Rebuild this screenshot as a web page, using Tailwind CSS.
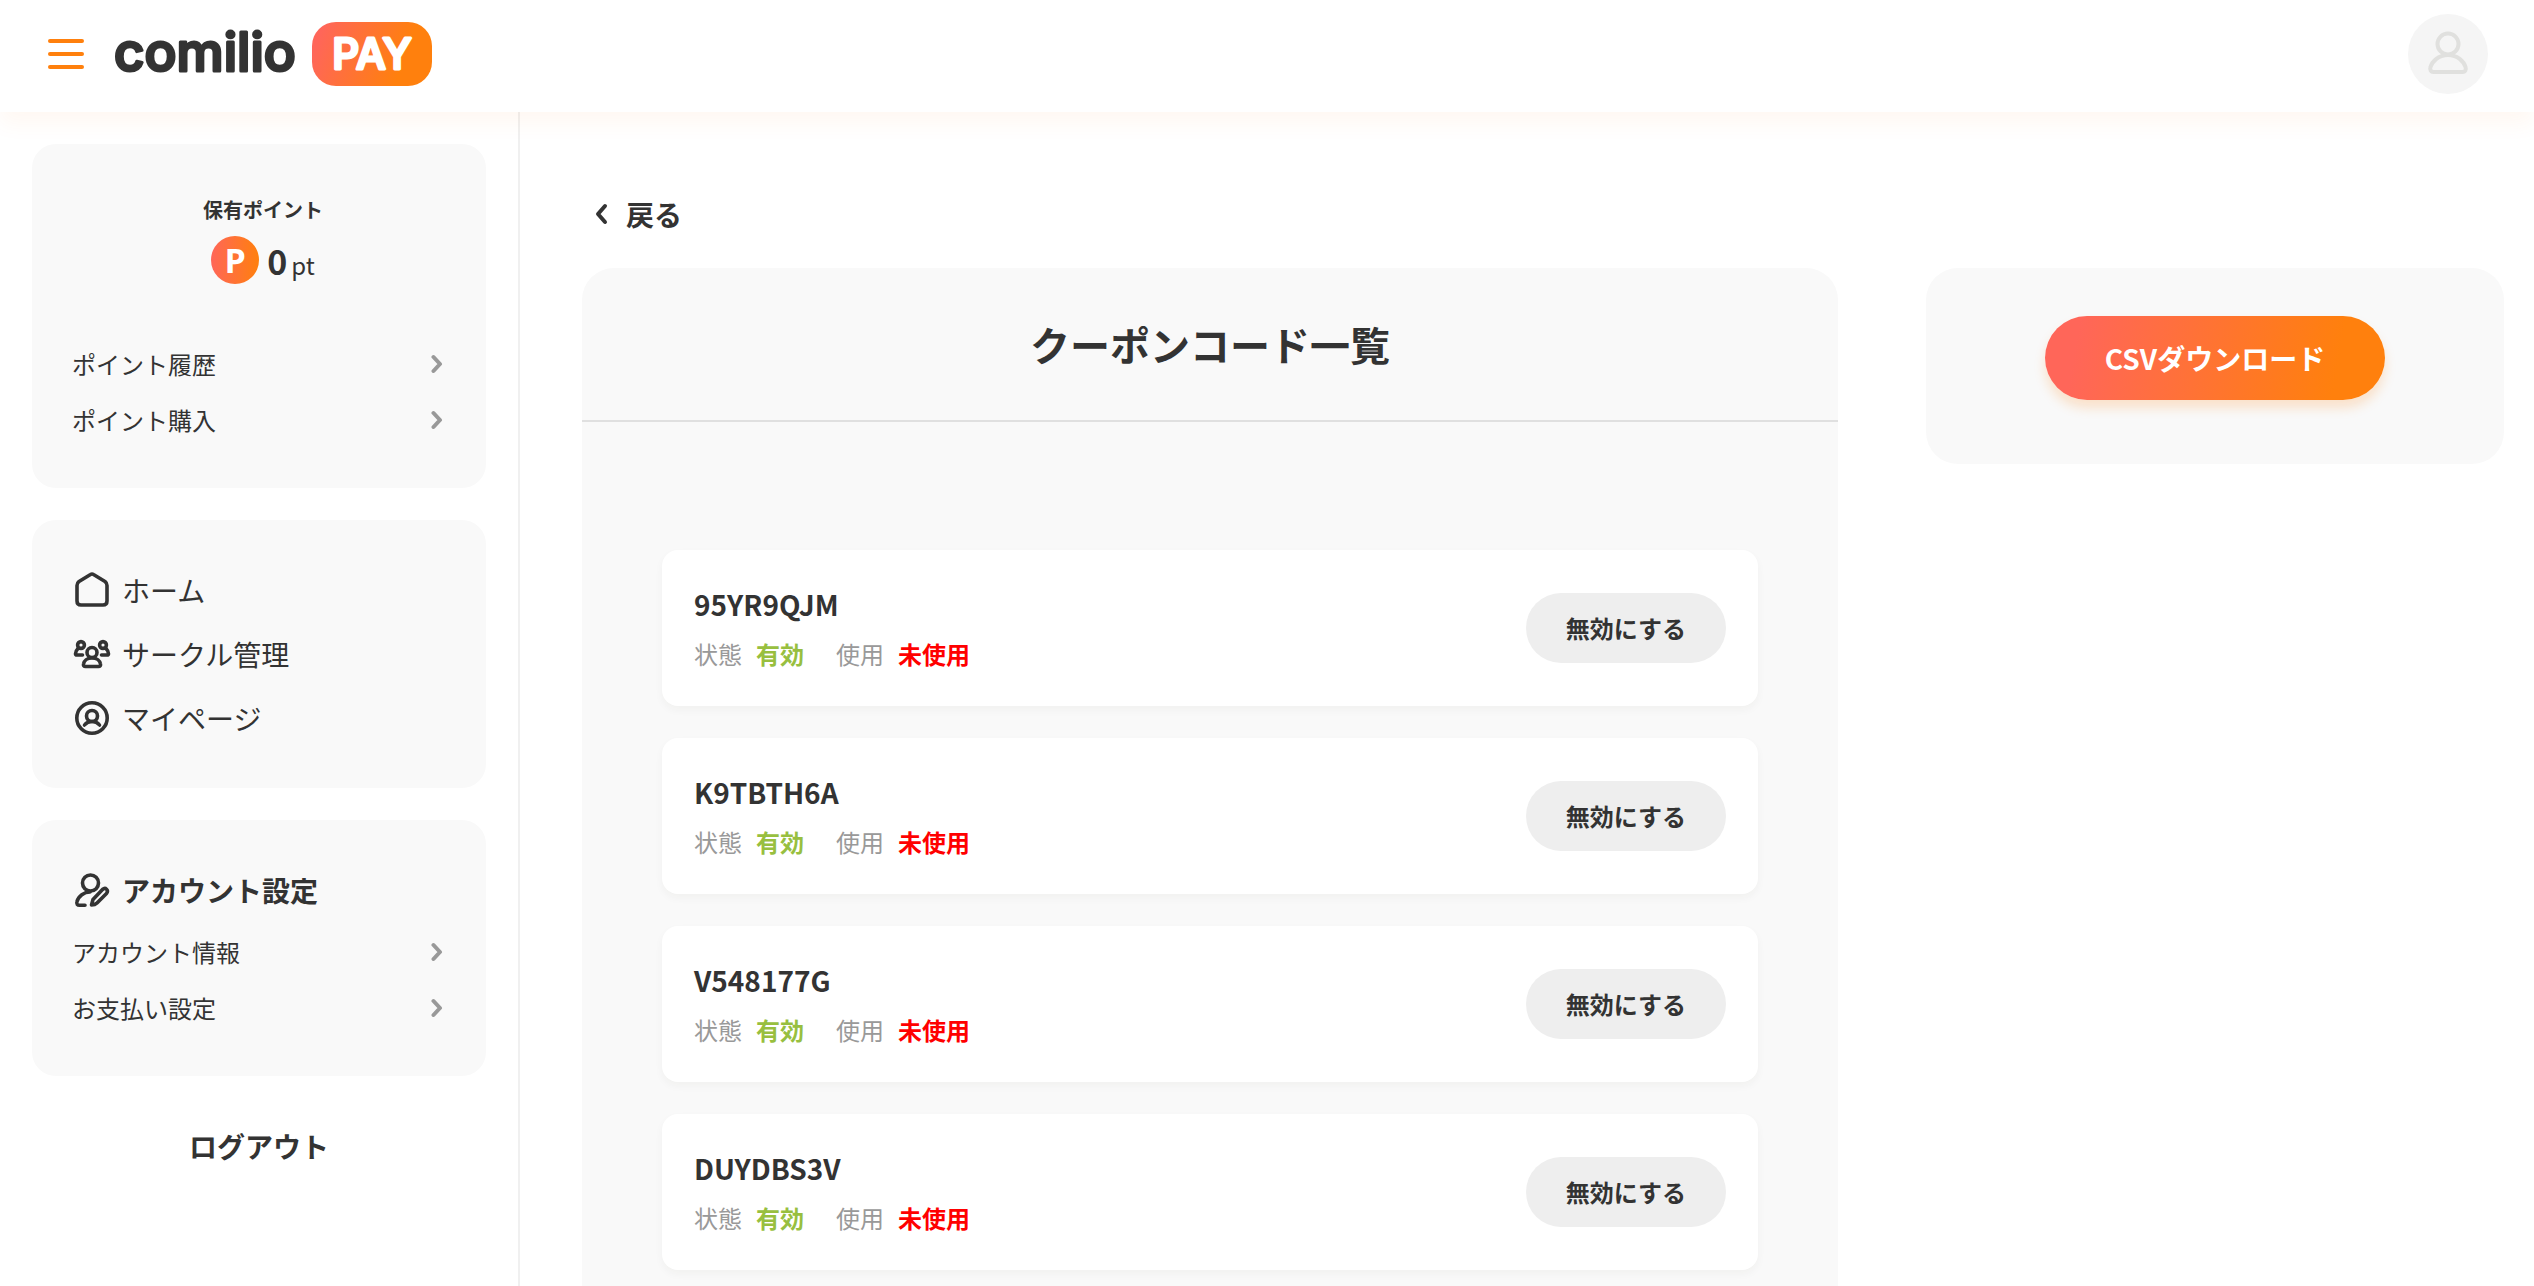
<!doctype html>
<html lang="ja">

<head>
    <meta charset="UTF-8">
    <meta name="viewport" content="width=device-width, initial-scale=1.0">
    <title>クーポンコード一覧 | comilio PAY</title>
    <script src="https://cdn.jsdelivr.net/npm/@tailwindcss/browser@4"></script>
</head>

<body class="flex flex-col min-h-screen bg-white text-[#333] font-['Noto_Sans_CJK_JP',sans-serif]">
    <!-- header -->
    <header class="relative z-10 flex items-center justify-between bg-white h-28 pl-12 pr-[46px] pb-1 shadow-[0_12px_20px_rgba(255,115,20,0.05)]">
        <div class="flex items-center gap-7">
            <button class="flex flex-col gap-[9px] w-9" aria-label="メニュー">
                <span class="h-1 w-full rounded-full bg-[#ff800d]"></span>
                <span class="h-1 w-full rounded-full bg-[#ff800d]"></span>
                <span class="h-1 w-full rounded-full bg-[#ff800d]"></span>
            </button>
            <a href="#" aria-label="comilio PAY">
                <svg class="overflow-visible" width="322" height="80" viewBox="0 -8 322 80">
                    <defs>
                        <linearGradient id="brand" x1="0" y1="0" x2="1" y2="0.2">
                            <stop offset="0.1" stop-color="#ff6659" />
                            <stop offset="0.85" stop-color="#ff800d" />
                        </linearGradient>
                    </defs>
                    <rect x="200" width="120" height="64" rx="24" fill="url(#brand)" />
                    <g font-family="Inter, sans-serif" stroke-linejoin="round">
                        <text x="2" y="49" font-size="53" font-weight="500" fill="#333" stroke="#333" stroke-width="3">comilio</text>
                        <text x="260" y="47" font-size="42" font-weight="500" text-anchor="middle" fill="#fff" stroke="#fff" stroke-width="3">PAY</text>
                    </g>
                </svg>
            </a>
        </div>
        <button class="flex items-center justify-center size-20 rounded-full bg-[#f5f5f5]" aria-label="アカウント">
            <svg width="44" height="48" viewBox="0 0 44 48" fill="none" stroke="#e0e0de" stroke-width="4">
                <circle cx="22" cy="14" r="10.5" />
                <path d="M22 25C12 25 6 32 4.500 37c-1 3 .5 5 3 5h29c2.500 0 4-2 3-5C38 32 32 25 22 25z" />
            </svg>
        </button>
    </header>

    <div class="flex flex-1">
        <!-- sidebar -->
        <aside class="shrink-0 w-[520px] border-r-2 border-[#f0f0f0] p-8 flex flex-col gap-8">
            <section class="bg-[#f9f9f9] rounded-3xl px-10 pt-[50px] pb-10">
                <div class="flex flex-col items-center gap-1.5 pl-2">
                    <p class="text-xl leading-8 font-bold">保有ポイント</p>
                    <div class="flex items-center gap-2 h-14">
                        <span class="flex items-center justify-center size-12 rounded-full bg-linear-to-r/srgb from-[#ff6659] to-[#ff800d] text-white text-[34px] leading-none font-bold font-['Open_Sans']">P</span>
                        <p class="flex items-baseline gap-1"><b class="text-[34px]">0</b><span class="text-2xl">pt</span></p>
                    </div>
                </div>
                <ul class="mt-12">
                    <li><a href="#" class="flex items-center justify-between h-14 text-2xl">ポイント履歴
                        <svg class="mr-[3px]" width="12" height="20" viewBox="0 0 12 20" fill="none" stroke="#999" stroke-width="4" stroke-linecap="round" stroke-linejoin="round"><path d="M2.500 3L9 10l-6.500 7" /></svg></a></li>
                    <li><a href="#" class="flex items-center justify-between h-14 text-2xl">ポイント購入
                        <svg class="mr-[3px]" width="12" height="20" viewBox="0 0 12 20" fill="none" stroke="#999" stroke-width="4" stroke-linecap="round" stroke-linejoin="round"><path d="M2.500 3L9 10l-6.500 7" /></svg></a></li>
                </ul>
            </section>

            <nav class="bg-[#f9f9f9] rounded-3xl px-10 py-[38px]">
                <a href="#" class="flex items-center gap-2.5 h-16 text-[28px]">
                    <svg width="40" height="40" viewBox="0 0 40 40" fill="none" stroke="#333" stroke-width="3.600" stroke-linejoin="round">
                        <path d="M18.500 4.500 7 11.500q-2 1.500-2 4v15.500q0 4 4 4h22q4 0 4-4V15.500q0-2.500-2-4L21.500 4.500q-1.500-1-3 0z" />
                    </svg>ホーム</a>
                <a href="#" class="flex items-center gap-2.5 h-16 text-[28px]">
                    <svg width="40" height="40" viewBox="0 0 40 40" fill="none" stroke="#333" stroke-width="3.600" stroke-linecap="round" stroke-linejoin="round">
                        <circle cx="20" cy="18.500" r="5" />
                        <path d="M20 24c-5 0-8 3-8.500 6-.3 1.500.5 2.500 2 2.500h13c1.500 0 2.300-1 2-2.500-.5-3-3.500-6-8.500-6z" />
                        <circle cx="9" cy="11" r="3.400" />
                        <circle cx="31" cy="11" r="3.400" />
                        <path d="M6 14.500c-2 2-2.500 4-2.500 5.200 0 .8.500 1.300 1.500 1.300h5.500M34 14.500c2 2 2.500 4 2.500 5.200 0 .8-.5 1.300-1.500 1.300h-5.500" />
                    </svg>サークル管理</a>
                <a href="#" class="flex items-center gap-2.5 h-16 text-[28px]">
                    <svg width="40" height="40" viewBox="0 0 40 40" fill="none" stroke="#333" stroke-width="3.600" stroke-linecap="round">
                        <circle cx="20" cy="20" r="15.200" />
                        <circle cx="20" cy="18" r="5.500" />
                        <path d="M12.500 27c2-2.500 4.500-3.500 7.500-3.500s5.500 1 7.500 3.500" />
                    </svg>マイページ</a>
            </nav>

            <section class="bg-[#f9f9f9] rounded-3xl px-10 pt-[38px] pb-10">
                <h2 class="flex items-center gap-2.5 h-16 text-[28px] font-bold">
                    <svg width="40" height="40" viewBox="0 0 40 40" fill="none" stroke="#333" stroke-width="3.600" stroke-linecap="round" stroke-linejoin="round">
                        <circle cx="18.500" cy="13" r="8" />
                        <path d="M18 22c-6 0-11.500 4-13 9.500C4.200 34 5.500 35.200 7.500 35.200h5.500" />
                        <path d="M19.500 35l1.500-5.500 9.500-10c3-2.500 6.500.5 4 4L25 33c-1.500 1.500-3.500 2-5.500 2z" />
                    </svg>アカウント設定</h2>
                <ul class="mt-0.5">
                    <li><a href="#" class="flex items-center justify-between h-14 text-2xl">アカウント情報
                        <svg class="mr-[3px]" width="12" height="20" viewBox="0 0 12 20" fill="none" stroke="#999" stroke-width="4" stroke-linecap="round" stroke-linejoin="round"><path d="M2.500 3L9 10l-6.500 7" /></svg></a></li>
                    <li><a href="#" class="flex items-center justify-between h-14 text-2xl">お支払い設定
                        <svg class="mr-[3px]" width="12" height="20" viewBox="0 0 12 20" fill="none" stroke="#999" stroke-width="4" stroke-linecap="round" stroke-linejoin="round"><path d="M2.500 3L9 10l-6.500 7" /></svg></a></li>
                </ul>
            </section>

            <button class="mt-3.5 h-12 text-[28px] font-bold">ログアウト</button>
        </aside>

        <!-- main -->
        <main class="flex flex-col flex-1 pt-[78px] pl-[62px] pr-[30px]">
            <a href="#" class="flex items-center gap-4 self-start h-12 mb-[30px] pl-3 text-[28px] font-bold">
                <svg width="16" height="24" viewBox="0 0 16 24" fill="none" stroke="#333" stroke-width="4" stroke-linecap="round" stroke-linejoin="round"><path d="M11 4L4 12l7 8" /></svg>戻る</a>

            <div class="flex flex-1 gap-[88px]">
                <section class="flex-1 bg-[#f9f9f9] rounded-t-[32px]">
                    <h1 class="h-[154px] flex items-center justify-center border-b-2 border-[#e0e0e0] text-[40px] font-bold">クーポンコード一覧</h1>
                    <ul class="flex flex-col gap-8 px-20 pt-32">
                        <li class="flex items-center justify-between h-[156px] px-8 bg-white rounded-2xl shadow-[0_4px_8px_rgba(51,51,0,0.04)]">
                            <div class="pt-0.5">
                                <p class="text-[28px] leading-[50px] font-bold">95YR9QJM</p>
                                <p class="flex gap-8 text-2xl leading-[50px] text-[#999]">
                                    <span>状態<b class="ml-3.5 text-[#98bf3f]">有効</b></span>
                                    <span>使用<b class="ml-3.5 text-[#f00]">未使用</b></span>
                                </p>
                            </div>
                            <button class="h-[70px] px-10 rounded-full bg-[#eee] text-2xl font-bold">無効にする</button>
                        </li>
                        <li class="flex items-center justify-between h-[156px] px-8 bg-white rounded-2xl shadow-[0_4px_8px_rgba(51,51,0,0.04)]">
                            <div class="pt-0.5">
                                <p class="text-[28px] leading-[50px] font-bold">K9TBTH6A</p>
                                <p class="flex gap-8 text-2xl leading-[50px] text-[#999]">
                                    <span>状態<b class="ml-3.5 text-[#98bf3f]">有効</b></span>
                                    <span>使用<b class="ml-3.5 text-[#f00]">未使用</b></span>
                                </p>
                            </div>
                            <button class="h-[70px] px-10 rounded-full bg-[#eee] text-2xl font-bold">無効にする</button>
                        </li>
                        <li class="flex items-center justify-between h-[156px] px-8 bg-white rounded-2xl shadow-[0_4px_8px_rgba(51,51,0,0.04)]">
                            <div class="pt-0.5">
                                <p class="text-[28px] leading-[50px] font-bold">V548177G</p>
                                <p class="flex gap-8 text-2xl leading-[50px] text-[#999]">
                                    <span>状態<b class="ml-3.5 text-[#98bf3f]">有効</b></span>
                                    <span>使用<b class="ml-3.5 text-[#f00]">未使用</b></span>
                                </p>
                            </div>
                            <button class="h-[70px] px-10 rounded-full bg-[#eee] text-2xl font-bold">無効にする</button>
                        </li>
                        <li class="flex items-center justify-between h-[156px] px-8 bg-white rounded-2xl shadow-[0_4px_8px_rgba(51,51,0,0.04)]">
                            <div class="pt-0.5">
                                <p class="text-[28px] leading-[50px] font-bold">DUYDBS3V</p>
                                <p class="flex gap-8 text-2xl leading-[50px] text-[#999]">
                                    <span>状態<b class="ml-3.5 text-[#98bf3f]">有効</b></span>
                                    <span>使用<b class="ml-3.5 text-[#f00]">未使用</b></span>
                                </p>
                            </div>
                            <button class="h-[70px] px-10 rounded-full bg-[#eee] text-2xl font-bold">無効にする</button>
                        </li>
                    </ul>
                </section>

                <section class="shrink-0 w-[578px] self-start flex justify-center bg-[#f9f9f9] rounded-[32px] pt-12 pb-16">
                    <button class="h-[84px] px-[60px] rounded-full bg-linear-100/srgb from-[#ff6659] from-10% to-[#ff800d] to-85% text-white text-[28px] font-bold shadow-[0_8px_12px_rgba(255,128,13,0.2)]">CSVダウンロード</button>
                </section>
            </div>
        </main>
    </div>
</body>

</html>
